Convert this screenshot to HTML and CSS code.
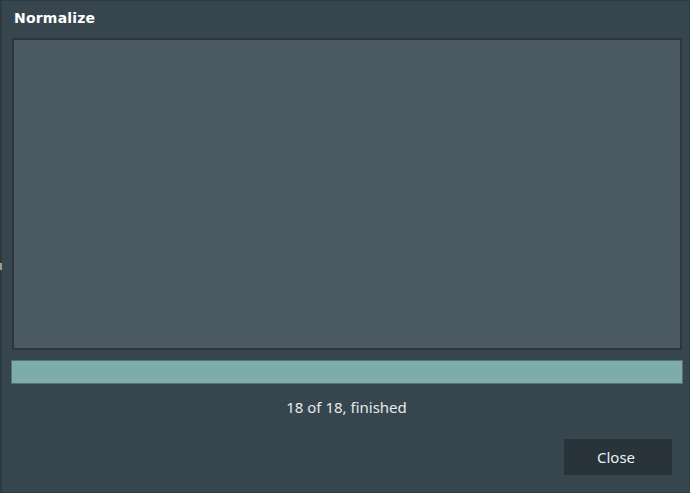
FILE: index.html
```html
<!DOCTYPE html>
<html>
<head>
<meta charset="utf-8">
<link rel="stylesheet" href="styles.css">
</head>
<body>
<div class="dialog">
  <div class="title">Normalize</div>
  <div class="panel"></div>
  <div class="progress"></div>
  <div class="status">18 of 18, finished</div>
  <div class="actions"><button class="btn">Close</button></div>
  <span class="edge-mark"></span>
</div>
</body>
</html>
```

FILE: styles.css
```css
html, body {
  margin: 0;
  padding: 0;
  background: #37464e;
}
.dialog {
  position: relative;
  box-sizing: border-box;
  width: 690px;
  height: 493px;
  background: #37464e;
  border-top: 1px solid #2c3a41;
  border-left: 2px solid #2c3a41;
  border-right: 1px solid #313f46;
  border-bottom: 1px solid #2c3a41;
  display: flex;
  flex-direction: column;
  font-family: "Noto Sans", "DejaVu Sans", sans-serif;
  color: #e8ecee;
}
.title {
  height: 37px;
  box-sizing: border-box;
  padding: 9px 0 0 12px;
  font-family: "DejaVu Sans", sans-serif;
  font-weight: bold;
  font-size: 14px;
  letter-spacing: 0.2px;
  line-height: 17px;
  color: #ffffff;
}
.panel {
  box-sizing: border-box;
  margin-left: 10px;
  width: 670px;
  height: 312px;
  background: #4b5962;
  border: 2px solid #2a363c;
}
.progress {
  box-sizing: border-box;
  margin: 10px 0 0 9px;
  width: 672px;
  height: 24px;
  background: #7cadaa;
  border: 1px solid #5e6f76;
}
.status {
  margin-top: 13px;
  height: 20px;
  line-height: 20px;
  text-align: center;
  font-size: 15px;
  color: #e6eaec;
  padding-left: 2px;
}
.actions {
  margin-top: 22px;
  display: flex;
  justify-content: flex-end;
  padding-right: 17px;
}
.btn {
  width: 108px;
  height: 36px;
  background: #28333a;
  border: none;
  color: #eef1f2;
  font-family: "Noto Sans", "DejaVu Sans", sans-serif;
  font-size: 15px;
  padding: 0 4px 0 0;
}
.edge-mark {
  position: absolute;
  left: -2px;
  top: 262px;
  width: 2px;
  height: 7px;
  background: #a89a88;
}
```
